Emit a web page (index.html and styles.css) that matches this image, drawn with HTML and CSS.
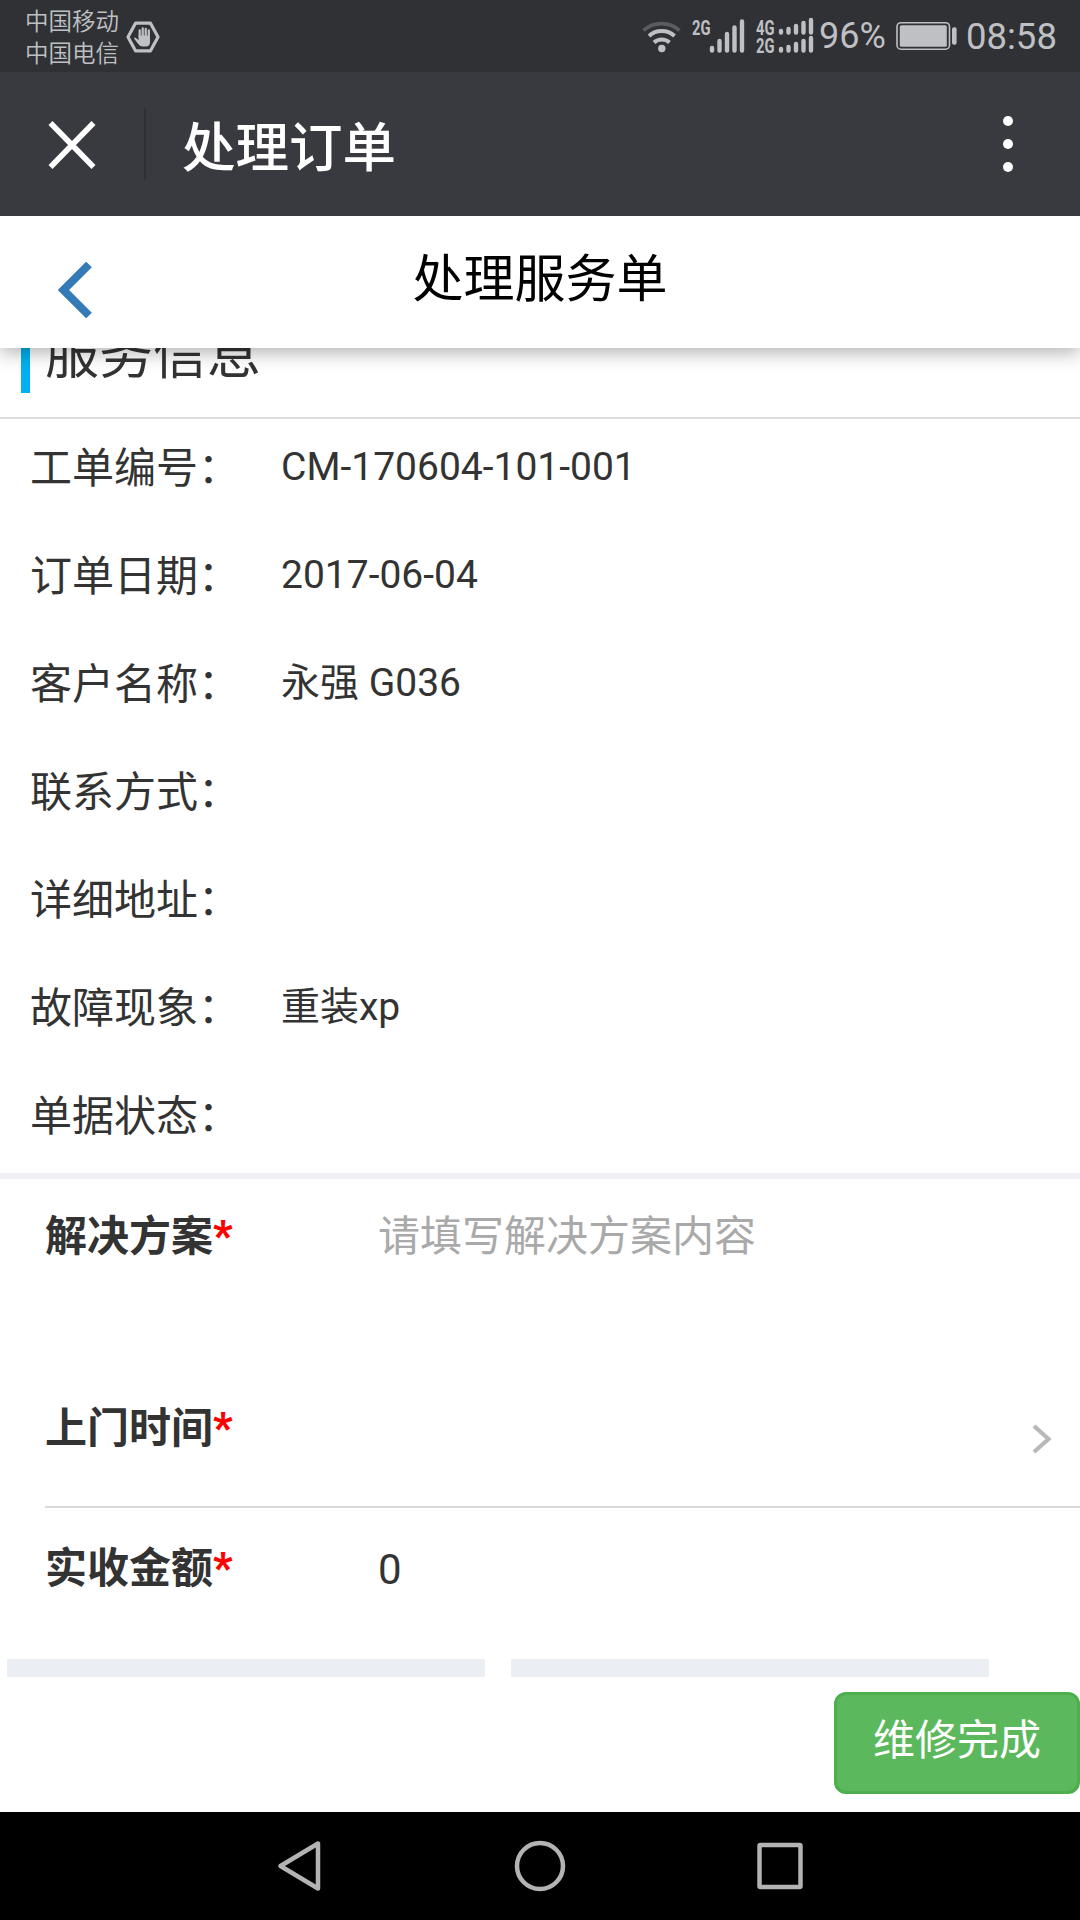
FILE: index.html
```html
<!DOCTYPE html>
<html lang="zh-CN">
<head>
<meta charset="utf-8">
<title>处理订单</title>
<link rel="stylesheet" href="styles.css">
</head>
<body>
<div class="screen">
  <div class="status-bar">
    <div class="carriers"><span>中国移动</span><span>中国电信</span></div>
    <svg class="hand-icon" width="34" height="32" viewBox="0 0 34 32">
      <path d="M9.500 2.200h15L32 16l-7.500 13.800h-15L2 16z" fill="none" stroke="#bfc0c4" stroke-width="3.200" stroke-linejoin="round"/>
      <path d="M13.700 16V9.300M16.700 15V7.500M19.700 15V7.800M22.800 16V9.500" stroke="#bfc0c4" stroke-width="2.300" stroke-linecap="round"/>
      <path d="M12.600 14.500H24v6.500q0 4.500-4.500 4.500h-2.800q-3 0-4.700-2.700l-3.800-5q-.6-1.500 1-1.300l3.400 2.400z" fill="#bfc0c4"/>
    </svg>
    <svg class="network-icons" width="176" height="40" viewBox="0 0 176 40">
      <g fill="none" stroke-linecap="butt">
        <path d="M2.500 14.500a27 27 0 0 1 36 0" stroke="#5b5c60" stroke-width="3.600"/>
        <path d="M8 20a19 19 0 0 1 25.500 0" stroke="#bfc0c4" stroke-width="4"/>
        <path d="M13 26.500a11.500 11.500 0 0 1 15.500 0" stroke="#bfc0c4" stroke-width="4"/>
      </g>
      <circle cx="20.800" cy="32.500" r="3.700" fill="#bfc0c4"/>
      <g class="network-label">
        <text x="51" y="18.800" textLength="18.500" lengthAdjust="spacingAndGlyphs">2G</text>
        <text x="115" y="18.800" textLength="18.500" lengthAdjust="spacingAndGlyphs">4G</text>
        <text x="115" y="36.800" textLength="18.500" lengthAdjust="spacingAndGlyphs">2G</text>
      </g>
      <g stroke="#bfc0c4" stroke-width="4.400" stroke-linecap="round">
        <path d="M71 34.500V32M78.500 34.500V25M86 34.500V18M93.500 34.500V11.500M101 34.500V5.500"/>
        <path d="M140 16.500V15M147.500 16.500V13M155 16.500V10M162.500 16.500V7M170 16.500V4"/>
        <path d="M140 34.500V33M147.500 34.500V31M155 34.500V28M162.500 34.500V25M170 34.500V22"/>
      </g>
    </svg>
    <span class="battery-level">96%</span>
    <svg class="battery-icon" width="61" height="30" viewBox="0 0 61 30">
      <rect x="1" y="1.700" width="52.500" height="26.500" rx="4" fill="none" stroke="#bfc0c4" stroke-width="1.600"/>
      <rect x="3.800" y="4.300" width="47" height="21.500" rx="1.500" fill="#bfc0c4"/>
      <rect x="56" y="6.300" width="4.600" height="17.500" rx="2" fill="#bfc0c4"/>
    </svg>
    <span class="clock">08:58</span>
  </div>

  <div class="app-bar">
    <svg class="close-icon" width="48" height="48" viewBox="0 0 48 48"><path d="M2.500 2l43 44M45.500 2l-43 44" stroke="#fff" stroke-width="5.600"/></svg>
    <div class="app-bar-divider"></div>
    <div class="app-title">处理订单</div>
    <div class="menu-dots"><i></i><i></i><i></i></div>
  </div>

  <header class="page-header">
    <svg class="back-icon" width="34" height="56" viewBox="0 0 34 56"><path d="M31 2.500L5.500 28 31 53.500" fill="none" stroke="#337ab7" stroke-width="8"/></svg>
    <h1>处理服务单</h1>
  </header>

  <main class="content">
    <h2 class="section-title">服务信息</h2>
    <dl class="info">
      <div class="info-row"><dt>工单编号：</dt><dd>CM-170604-101-001</dd></div>
      <div class="info-row"><dt>订单日期：</dt><dd>2017-06-04</dd></div>
      <div class="info-row"><dt>客户名称：</dt><dd>永强 G036</dd></div>
      <div class="info-row"><dt>联系方式：</dt><dd></dd></div>
      <div class="info-row"><dt>详细地址：</dt><dd></dd></div>
      <div class="info-row"><dt>故障现象：</dt><dd>重装xp</dd></div>
      <div class="info-row"><dt>单据状态：</dt><dd></dd></div>
    </dl>
    <div class="form">
      <div class="form-row form-row-solution"><label>解决方案<b>*</b></label><span class="placeholder">请填写解决方案内容</span></div>
      <div class="form-row form-row-time"><label>上门时间<b>*</b></label>
        <svg class="arrow-icon" width="20" height="30" viewBox="0 0 20 30"><path d="M2 2l14.500 13L2 28" fill="none" stroke="#b8b8b8" stroke-width="4.200"/></svg>
      </div>
      <div class="form-row form-row-amount"><label>实收金额<b>*</b></label><span class="amount">0</span></div>
    </div>
    <div class="strips"><div></div><div></div></div>
    <div class="actions"><button type="button">维修完成</button></div>
  </main>

  <nav class="nav-bar">
    <svg width="46" height="52" viewBox="0 0 46 52"><path d="M41 3.500v45L3.500 26z"/></svg>
    <svg width="52" height="52" viewBox="0 0 52 52"><circle cx="26" cy="26" r="23"/></svg>
    <svg width="46" height="52" viewBox="0 0 46 52"><rect x="2.500" y="5" width="41" height="42" rx="1"/></svg>
  </nav>
</div>
</body>
</html>
```
FILE: styles.css
```css
* { box-sizing: border-box; }
body, h1, h2, dl, dd { margin: 0; }
body {
  font-family: Roboto, "Noto Sans CJK SC", sans-serif;
  color: #333;
  background: #fff;
}
svg { display: block; flex: none; }
.screen {
  width: 1080px;
  height: 1920px;
  display: flex;
  flex-direction: column;
  overflow: hidden;
}

/* system status bar */
.status-bar {
  height: 72px;
  flex: none;
  display: flex;
  align-items: center;
  padding: 0 22px 0 25px;
  background: #303135;
  color: #bfc0c4;
}
.carriers {
  display: flex;
  flex-direction: column;
  font-size: 23.5px;
  font-weight: 350;
  line-height: 32px;
  width: 101px;
  padding-top: 4px;
}
.hand-icon { margin-top: 2px; }
.network-icons { margin: 0 2px 0 auto; overflow: visible; }
.network-label {
  font: 700 20px Roboto, sans-serif;
  fill: #bfc0c4;
}
.battery-level { width: 77px; font-size: 36px; line-height: 42px; }
.clock { width: 92px; font-size: 36.5px; line-height: 42px; margin: 2px 0 0 9px; }

/* container title bar */
.app-bar {
  height: 144px;
  flex: none;
  display: flex;
  align-items: center;
  padding: 0 67px 0 48px;
  background: #393a3f;
  z-index: 2;
}
.close-icon { margin-top: 1px; }
.app-bar-divider { width: 2px; height: 72px; margin: 0 36px 0 48px; background: #2f3034; }
.app-title { font-size: 53.5px; font-weight: 500; line-height: 80px; padding-top: 9px; color: #fff; }
.menu-dots { margin-left: auto; display: flex; flex-direction: column; gap: 12.5px; }
.menu-dots i { width: 10.5px; height: 10.5px; border-radius: 50%; background: #fff; }

/* page header */
.page-header {
  height: 132px;
  flex: none;
  display: grid;
  grid-template-columns: 115px 1fr 115px;
  padding-top: 24px;
  background: #fff;
  box-shadow: 0 4px 18px rgba(0, 0, 0, .32);
  z-index: 1;
}
.back-icon { margin: 22px 0 0 58px; }
.page-header h1 {
  text-align: center;
  font-size: 51px;
  font-weight: 400;
  line-height: 80px;
  color: #000;
}

.content { flex: 1; overflow: hidden; }
.section-title {
  height: 84px;
  margin: -39px 0 0 21px;
  border-left: 9px solid #00b0f0;
  padding-left: 15px;
  font-size: 54px;
  font-weight: 400;
  line-height: 93px;
}
.info {
  margin-top: 24px;
  border-top: 2px solid #ddd;
  border-bottom: 6px solid #efeff4;
  padding: 0 0 5px 30px;
}
.info-row { display: flex; height: 108px; line-height: 96px; white-space: nowrap; }
.info-row:last-child { height: 101.4px; }
.info-row dt { width: 251px; font-size: 42px; line-height: 100px; }
.info-row dd { font-size: 39px; }

.form { height: 480px; font-size: 42px; line-height: 62px; }
.form-row { display: flex; margin-left: 45px; }
.form-row label { width: 333px; font-weight: 700; }
.form-row b { color: #f00; line-height: 1; vertical-align: 1px; }
.form-row-solution { height: 192px; padding-top: 27px; }
.form-row-time { height: 137px; padding-top: 27px; border-bottom: 2px solid #d9d9d9; }
.form-row-amount { padding-top: 30px; }
.amount { padding-top: 1px; }
.placeholder { color: #a9a9a9; }
.arrow-icon { margin: 26px 28px 0 auto; }

.strips { display: flex; gap: 26px; padding-left: 7px; }
.strips div { width: 478px; height: 18px; background: #ebeef2; }
.actions { display: flex; justify-content: flex-end; padding-top: 15px; }
.actions button {
  width: 246px;
  height: 102px;
  border: 3px solid #4cae4c;
  border-radius: 12px;
  padding: 0 0 13px;
  background: #5cb85c;
  color: #fff;
  font: 400 42px Roboto, "Noto Sans CJK SC", sans-serif;
}

/* system navigation */
.nav-bar {
  height: 108px;
  flex: none;
  display: flex;
  align-items: center;
  justify-content: space-between;
  padding: 0 277px;
  background: #000;
}
.nav-bar svg { fill: none; stroke: #b3b3b3; stroke-width: 4.5; stroke-linejoin: round; }
```
